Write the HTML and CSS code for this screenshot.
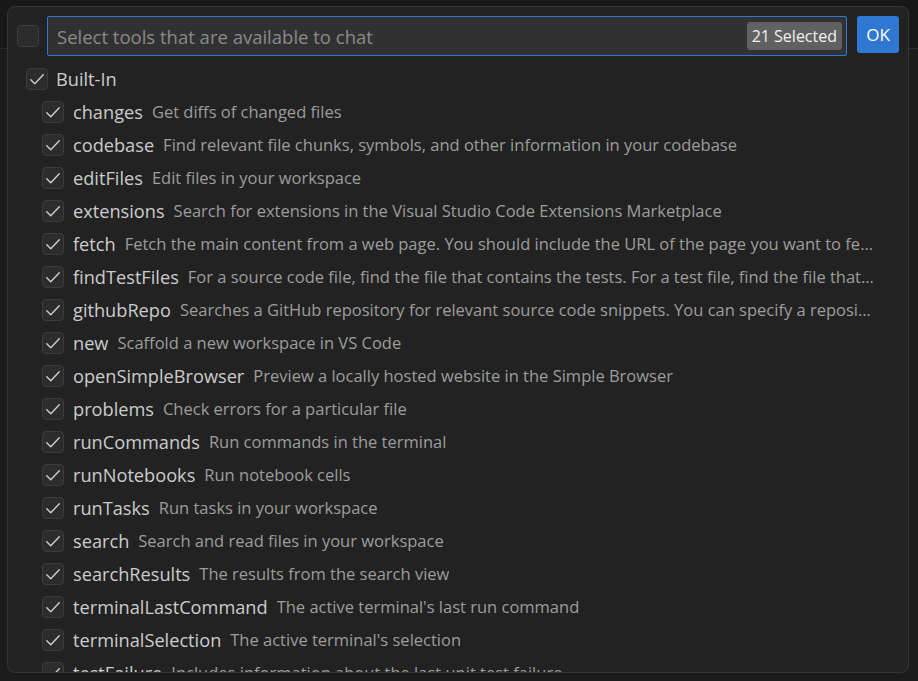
FILE: index.html
```html
<!DOCTYPE html>
<html lang="en">
<head>
<meta charset="utf-8">
<title>Select tools</title>
<link rel="stylesheet" href="styles.css">
</head>
<body>
<div class="dialog">
  <div class="header">
    <span class="cb"></span>
    <div class="input">
      <span class="placeholder">Select tools that are available to chat</span>
      <span class="badge">21 Selected</span>
    </div>
    <button class="ok">OK</button>
  </div>
  <div class="list">
    <div class="row group">
      <span class="cb checked"><svg viewBox="0 0 16 16"><path d="M3 8.6 L6.2 11.8 L13 4.6"/></svg></span>
      <span class="label">Built-In</span>
    </div>
    <div class="row"><span class="cb checked"><svg viewBox="0 0 16 16"><path d="M3 8.6 L6.2 11.8 L13 4.6"/></svg></span><span class="label">changes</span><span class="desc">Get diffs of changed files</span></div>
    <div class="row"><span class="cb checked"><svg viewBox="0 0 16 16"><path d="M3 8.6 L6.2 11.8 L13 4.6"/></svg></span><span class="label">codebase</span><span class="desc">Find relevant file chunks, symbols, and other information in your codebase</span></div>
    <div class="row"><span class="cb checked"><svg viewBox="0 0 16 16"><path d="M3 8.6 L6.2 11.8 L13 4.6"/></svg></span><span class="label">editFiles</span><span class="desc">Edit files in your workspace</span></div>
    <div class="row"><span class="cb checked"><svg viewBox="0 0 16 16"><path d="M3 8.6 L6.2 11.8 L13 4.6"/></svg></span><span class="label">extensions</span><span class="desc">Search for extensions in the Visual Studio Code Extensions Marketplace</span></div>
    <div class="row"><span class="cb checked"><svg viewBox="0 0 16 16"><path d="M3 8.6 L6.2 11.8 L13 4.6"/></svg></span><span class="label">fetch</span><span class="desc">Fetch the main content from a web page. You should include the URL of the page you want to fetch content from.</span></div>
    <div class="row"><span class="cb checked"><svg viewBox="0 0 16 16"><path d="M3 8.6 L6.2 11.8 L13 4.6"/></svg></span><span class="label">findTestFiles</span><span class="desc">For a source code file, find the file that contains the tests. For a test file, find the file that contains the code under test.</span></div>
    <div class="row"><span class="cb checked"><svg viewBox="0 0 16 16"><path d="M3 8.6 L6.2 11.8 L13 4.6"/></svg></span><span class="label">githubRepo</span><span class="desc">Searches a GitHub repository for relevant source code snippets. You can specify a repository using owner/repo</span></div>
    <div class="row"><span class="cb checked"><svg viewBox="0 0 16 16"><path d="M3 8.6 L6.2 11.8 L13 4.6"/></svg></span><span class="label">new</span><span class="desc">Scaffold a new workspace in VS Code</span></div>
    <div class="row"><span class="cb checked"><svg viewBox="0 0 16 16"><path d="M3 8.6 L6.2 11.8 L13 4.6"/></svg></span><span class="label">openSimpleBrowser</span><span class="desc">Preview a locally hosted website in the Simple Browser</span></div>
    <div class="row"><span class="cb checked"><svg viewBox="0 0 16 16"><path d="M3 8.6 L6.2 11.8 L13 4.6"/></svg></span><span class="label">problems</span><span class="desc">Check errors for a particular file</span></div>
    <div class="row"><span class="cb checked"><svg viewBox="0 0 16 16"><path d="M3 8.6 L6.2 11.8 L13 4.6"/></svg></span><span class="label">runCommands</span><span class="desc">Run commands in the terminal</span></div>
    <div class="row"><span class="cb checked"><svg viewBox="0 0 16 16"><path d="M3 8.6 L6.2 11.8 L13 4.6"/></svg></span><span class="label">runNotebooks</span><span class="desc">Run notebook cells</span></div>
    <div class="row"><span class="cb checked"><svg viewBox="0 0 16 16"><path d="M3 8.6 L6.2 11.8 L13 4.6"/></svg></span><span class="label">runTasks</span><span class="desc">Run tasks in your workspace</span></div>
    <div class="row"><span class="cb checked"><svg viewBox="0 0 16 16"><path d="M3 8.6 L6.2 11.8 L13 4.6"/></svg></span><span class="label">search</span><span class="desc">Search and read files in your workspace</span></div>
    <div class="row"><span class="cb checked"><svg viewBox="0 0 16 16"><path d="M3 8.6 L6.2 11.8 L13 4.6"/></svg></span><span class="label">searchResults</span><span class="desc">The results from the search view</span></div>
    <div class="row"><span class="cb checked"><svg viewBox="0 0 16 16"><path d="M3 8.6 L6.2 11.8 L13 4.6"/></svg></span><span class="label">terminalLastCommand</span><span class="desc">The active terminal's last run command</span></div>
    <div class="row"><span class="cb checked"><svg viewBox="0 0 16 16"><path d="M3 8.6 L6.2 11.8 L13 4.6"/></svg></span><span class="label">terminalSelection</span><span class="desc">The active terminal's selection</span></div>
    <div class="row"><span class="cb checked"><svg viewBox="0 0 16 16"><path d="M3 8.6 L6.2 11.8 L13 4.6"/></svg></span><span class="label">testFailure</span><span class="desc">Includes information about the last unit test failure</span></div>
  </div>
</div>
</body>
</html>
```

FILE: styles.css
```css
html, body {
  margin: 0;
  padding: 0;
}
body {
  width: 918px;
  height: 681px;
  overflow: hidden;
  background:
    linear-gradient(#181818 0 48px, #2b2b2b 48px 49px, #1c1c1c 49px);
  font-family: "Open Sans", "Noto Sans", sans-serif;
  padding-top: 6px;
  padding-left: 7px;
  box-sizing: border-box;
}
.dialog {
  width: 902px;
  height: 667px;
  box-sizing: border-box;
  background: #222222;
  border: 1px solid #353535;
  border-radius: 8px;
  overflow: hidden;
  display: flex;
  flex-direction: column;
}
.header {
  display: flex;
  align-items: flex-start;
  padding: 9px 9px 0 9px;
}
.header > .cb {
  margin-top: 9px;
  margin-right: 8px;
}
.cb {
  flex: none;
  width: 22px;
  height: 22px;
  box-sizing: border-box;
  background: #2c2c2c;
  border: 1px solid #3c3c3c;
  border-radius: 4px;
  display: flex;
  align-items: center;
  justify-content: center;
}
.cb svg {
  width: 20px;
  height: 20px;
  fill: none;
  stroke: #d0d0d0;
  stroke-width: 1.1;
  stroke-linecap: round;
  stroke-linejoin: round;
}
.input {
  flex: 1;
  height: 40px;
  box-sizing: border-box;
  background: #313131;
  border: 1px solid #2f77d1;
  border-radius: 2px;
  display: flex;
  align-items: center;
  padding: 0 4px 0 9px;
}
.placeholder {
  flex: 1;
  color: #8a8a8a;
  font-size: 18.5px;
}
.badge {
  background: #616161;
  color: #f2f2f2;
  font-size: 16px;
  padding: 0 5px;
  height: 28px;
  line-height: 28px;
  border-radius: 3px;
}
.ok {
  margin-left: 10px;
  width: 42px;
  height: 37px;
  border: none;
  border-radius: 3px;
  background: #2f77d1;
  color: #ffffff;
  font-family: inherit;
  font-size: 17px;
  padding: 0;
}
.list {
  margin-top: 6px;
  padding-right: 34px;
}
.row {
  height: 33px;
  display: flex;
  align-items: center;
  padding-left: 34px;
  white-space: nowrap;
  overflow: hidden;
}
.row.group {
  padding-left: 18px;
}
.row .cb {
  margin-right: 9px;
}
.row.group .cb {
  margin-right: 8px;
}
.label {
  flex: none;
  color: #cccccc;
  font-size: 18.2px;
}
.desc {
  flex: 0 1 auto;
  min-width: 0;
  margin-left: 9px;
  color: #9d9d9d;
  font-size: 16.5px;
  overflow: hidden;
  text-overflow: ellipsis;
}
```
